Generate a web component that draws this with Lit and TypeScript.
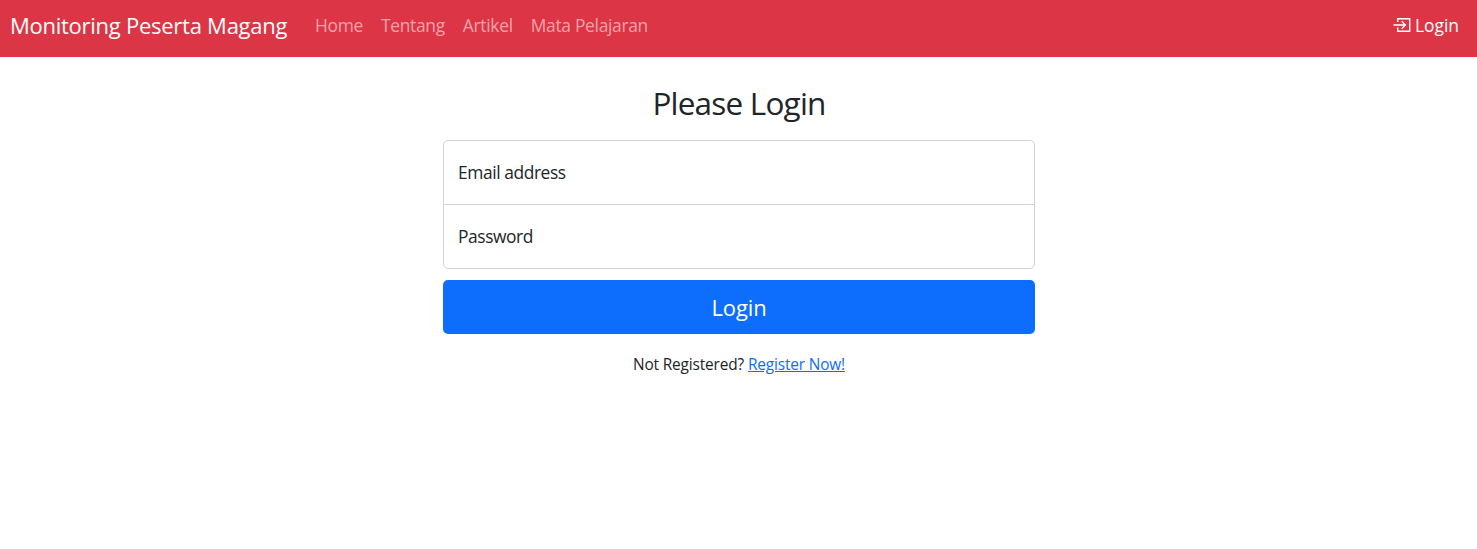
import { LitElement, html, css } from "lit";
import { customElement } from "lit/decorators.js";

@customElement("app-root")
export class AppRoot extends LitElement {
  static styles = css`
    :host { display: block; height: 549px; background: #fff; color: #212529; font-family: "Segoe UI", "Open Sans", "Noto Sans", sans-serif; font-size: 17.4px; font-weight: 400; line-height: 26px; letter-spacing: -0.42px; }
    * { box-sizing: border-box; }
    a { text-decoration: none; color: inherit; white-space: nowrap; }
    .bar { height: 57px; background: #dc3545; display: flex; align-items: center; padding: 0 18px 6px 10px; color: #fff; }
    .brand { width: 305px; font-size: 22px; line-height: 33px; letter-spacing: -0.26px; }
    .links { display: flex; gap: 18px; padding-bottom: 1px; color: rgba(255, 255, 255, 0.55); letter-spacing: -0.3px; }
    .login { margin-left: auto; display: flex; align-items: center; gap: 4px; padding-bottom: 1px; letter-spacing: 0; }
    .icon { width: 18px; height: 18px; display: block; }
    main { width: 592px; margin: 0 auto 0 443px; padding-top: 27px; text-align: center; }
    h1 { margin: 0 0 18px; font-size: 31.5px; line-height: 38px; font-weight: 400; letter-spacing: -0.8px; }
    .fields { border: 1px solid #ced4da; border-radius: 5px; height: 129px; text-align: left; margin-bottom: 11px; }
    .field { height: 63px; padding: 0 14px 1px; display: flex; align-items: center; }
    .field + .field { height: 64px; border-top: 1px solid #ced4da; }
    .submit { display: block; width: 100%; height: 54px; border: 0; border-radius: 5px; background: #0d6efd; color: #fff; font: inherit; font-size: 22px; padding: 0 0 1px; letter-spacing: -0.15px; }
    .note { display: flex; justify-content: center; gap: 4px; margin-top: 19px; font-size: 15.4px; line-height: 23px; letter-spacing: -0.15px; }
    .register { color: #0d6efd; text-decoration: underline; }
  `;

  render() {
    return html`
      <nav class="bar">
        <a class="brand">Monitoring Peserta Magang</a>
        <div class="links"><a>Home</a><a>Tentang</a><a>Artikel</a><a>Mata Pelajaran</a></div>
        <a class="login">
          <svg class="icon" viewBox="0 0 18 18" fill="none" stroke="currentColor" stroke-width="1.4">
            <path d="M4.700 6V2.700h12v12.600h-12V11.500"/>
            <path d="M0.500 9h11.500M8.700 5.300L12.300 9l-3.600 3.700"/>
          </svg>
          <span>Login</span>
        </a>
      </nav>
      <main>
        <h1>Please Login</h1>
        <div class="fields">
          <div class="field"><label>Email address</label></div>
          <div class="field"><label>Password</label></div>
        </div>
        <button class="submit">Login</button>
        <div class="note"><span>Not Registered?</span><a class="register">Register Now!</a></div>
      </main>
    `;
  }
}
